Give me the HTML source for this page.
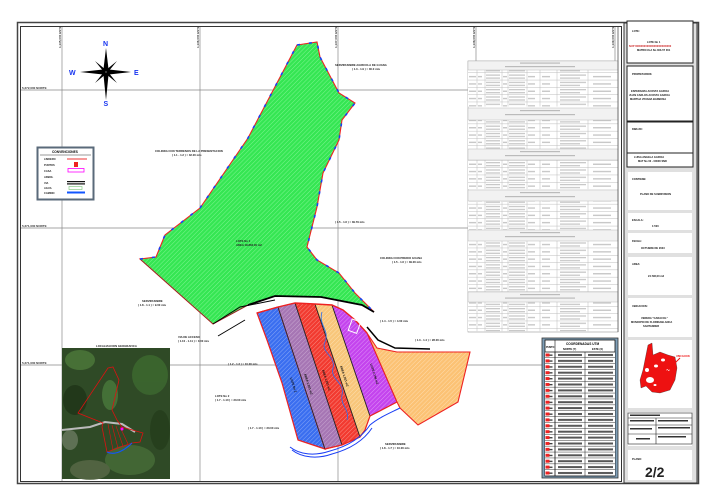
<!DOCTYPE html>
<html><head><meta charset="utf-8"><style>
html,body{margin:0;padding:0;background:#fff}
svg{display:block}
text{font-family:"Liberation Sans",sans-serif;font-weight:bold}
</style></head><body>
<svg width="714" height="501" viewBox="0 0 714 501" xmlns="http://www.w3.org/2000/svg">
<defs>
<pattern id="hg" width="3" height="3" patternUnits="userSpaceOnUse" patternTransform="rotate(45)"><rect width="3" height="3" fill="#35e653"/><line x1="0" y1="0" x2="0" y2="3" stroke="#7cf58f" stroke-width="1"/></pattern>
<pattern id="hb" width="3" height="3" patternUnits="userSpaceOnUse" patternTransform="rotate(45)"><rect width="3" height="3" fill="#3a6ef0"/><line x1="0" y1="0" x2="0" y2="3" stroke="#86a6f6" stroke-width="1"/></pattern>
<pattern id="hp" width="3" height="3" patternUnits="userSpaceOnUse" patternTransform="rotate(45)"><rect width="3" height="3" fill="#a676b4"/><line x1="0" y1="0" x2="0" y2="3" stroke="#c8a6d0" stroke-width="1"/></pattern>
<pattern id="hr" width="3" height="3" patternUnits="userSpaceOnUse" patternTransform="rotate(45)"><rect width="3" height="3" fill="#f23a30"/><line x1="0" y1="0" x2="0" y2="3" stroke="#f88a80" stroke-width="1"/></pattern>
<pattern id="ht" width="3" height="3" patternUnits="userSpaceOnUse" patternTransform="rotate(45)"><rect width="3" height="3" fill="#f8c67a"/><line x1="0" y1="0" x2="0" y2="3" stroke="#fce0b0" stroke-width="1"/></pattern>
<pattern id="hm" width="3" height="3" patternUnits="userSpaceOnUse" patternTransform="rotate(45)"><rect width="3" height="3" fill="#c444ee"/><line x1="0" y1="0" x2="0" y2="3" stroke="#de90f6" stroke-width="1"/></pattern>
<pattern id="ho" width="3" height="3" patternUnits="userSpaceOnUse" patternTransform="rotate(45)"><rect width="3" height="3" fill="#fcc274"/><line x1="0" y1="0" x2="0" y2="3" stroke="#fedcae" stroke-width="1"/></pattern>
<pattern id="trow" x="468" y="0" width="150" height="7.3" patternUnits="userSpaceOnUse">
<rect width="150" height="7.3" fill="#fff"/>
<line x1="0" y1="7.1" x2="150" y2="7.1" stroke="#bbb" stroke-width="0.5"/>
<g fill="#c4c4c4"><rect x="1" y="3" width="7" height="1.3"/><rect x="10" y="3" width="4" height="1.3"/><rect x="18" y="1.5" width="14" height="1.2"/><rect x="18" y="4.5" width="14" height="1.2"/><rect x="35" y="3" width="4" height="1.3"/><rect x="41" y="1.5" width="16" height="1.2"/><rect x="41" y="4.5" width="16" height="1.2"/><rect x="60" y="3" width="7" height="1.3"/><rect x="74" y="3" width="8" height="1.3"/><rect x="92" y="1.5" width="26" height="1.2"/><rect x="92" y="4.5" width="20" height="1.2"/><rect x="125" y="3" width="18" height="1.3"/></g>
<g stroke="#bbb" stroke-width="0.5"><line x1="9" y1="0" x2="9" y2="7.3"/><line x1="17" y1="0" x2="17" y2="7.3"/><line x1="34" y1="0" x2="34" y2="7.3"/><line x1="40" y1="0" x2="40" y2="7.3"/><line x1="59" y1="0" x2="59" y2="7.3"/><line x1="72" y1="0" x2="72" y2="7.3"/><line x1="89" y1="0" x2="89" y2="7.3"/><line x1="120" y1="0" x2="120" y2="7.3"/></g>
</pattern>
<pattern id="crow" x="545" y="352" width="70" height="5.9" patternUnits="userSpaceOnUse">
<rect width="70" height="5.9" fill="#fff"/>
<line x1="0" y1="5.7" x2="70" y2="5.7" stroke="#333" stroke-width="0.6"/>
<rect x="0.5" y="1.5" width="4" height="3" fill="#e22"/><rect x="4.5" y="2.5" width="3" height="1.3" fill="#333"/>
<line x1="10" y1="0" x2="10" y2="5.9" stroke="#333" stroke-width="0.6"/>
<line x1="40" y1="0" x2="40" y2="5.9" stroke="#333" stroke-width="0.6"/>
<rect x="13" y="2" width="24" height="2" fill="#555"/><rect x="43" y="2" width="25" height="2" fill="#555"/>
</pattern>
</defs>

<rect x="17.5" y="22.5" width="681" height="461" fill="none" stroke="#444" stroke-width="1.5"/>
<rect x="20.5" y="26.5" width="601" height="455" fill="none" stroke="#333" stroke-width="1"/>
<rect x="624" y="23" width="73" height="460" fill="#e0e0e0" stroke="#333" stroke-width="1"/>

<g stroke="#888" stroke-width="0.7">
<line x1="62" y1="27" x2="62" y2="481"/><line x1="200" y1="27" x2="200" y2="481"/><line x1="338" y1="27" x2="338" y2="481"/><line x1="476" y1="27" x2="476" y2="62"/><line x1="615" y1="27" x2="615" y2="62"/>
<line x1="21" y1="90" x2="468" y2="90"/><line x1="21" y1="228" x2="468" y2="228"/><line x1="21" y1="365" x2="545" y2="365"/>
</g>
<g font-size="3" fill="#333">
<text x="22" y="89">5,272,000 NORTE</text><text x="22" y="227">5,271,000 NORTE</text><text x="22" y="364">5,271,000 NORTE</text>
<text transform="translate(61,48) rotate(-90)">1,135,000 ESTE</text><text transform="translate(199,48) rotate(-90)">1,136,000 ESTE</text><text transform="translate(337,48) rotate(-90)">1,137,000 ESTE</text><text transform="translate(475,48) rotate(-90)">1,138,000 ESTE</text><text transform="translate(614,48) rotate(-90)">1,139,000 ESTE</text>
</g>

<g fill="#000">
<polygon points="106,48 108.5,69 106,72 103.5,69"/><polygon points="106,100 108.5,75 106,72 103.5,75"/>
<polygon points="80,72 103,69.5 106,72 103,74.5"/><polygon points="131,72 109,69.5 106,72 109,74.5"/>
<polygon points="95,61 106,70 104,72"/><polygon points="117,61 106,70 108,72"/><polygon points="95,83 106,74 104,72"/><polygon points="117,83 106,74 108,72"/>
</g>
<g fill="#1533f0" font-size="7"><text x="103" y="46">N</text><text x="103.5" y="106">S</text><text x="69" y="75">W</text><text x="134" y="75">E</text></g>

<rect x="37.5" y="147.5" width="56" height="52" fill="#fff" stroke="#5a6a7a" stroke-width="2"/>
<line x1="40" y1="155" x2="91" y2="155" stroke="#333" stroke-width="0.6"/>
<text x="52" y="153" font-size="3.2">CONVENCIONES</text>
<g font-size="2.6" fill="#222"><text x="44" y="160">LINDERO</text><text x="44" y="166">PUNTOS</text><text x="44" y="172">CASA</text><text x="44" y="178">ARBOL</text><text x="44" y="184">VIA</text><text x="44" y="189">AGUA</text><text x="44" y="194">CAMINO</text></g>
<line x1="67" y1="159" x2="87" y2="159" stroke="#e33" stroke-width="1"/>
<rect x="74" y="162" width="4" height="5" fill="#e22"/>
<rect x="68" y="168.5" width="16" height="3.5" fill="none" stroke="#f0f" stroke-width="0.8"/>
<rect x="67" y="181" width="18" height="1.2" fill="#111"/><rect x="67" y="183.3" width="18" height="1.2" fill="#111"/>
<rect x="69" y="186.5" width="13" height="3" fill="none" stroke="#8c8" stroke-width="0.7"/>
<rect x="67" y="191.5" width="18" height="2" fill="#15f"/>

<polygon points="297,45 317,42 320,57 339,93 355,103 342,120 339,140 323,173 317,207 307,247 317,260 339,273 355,293 374,312 362,305 321,297 275,296 248,305 213,324 140,259 156,257 165,235 200,208 248,138" fill="url(#hg)" stroke="#e22" stroke-width="1.1"/>
<polyline points="140,259 213,324 248,305" fill="none" stroke="#333" stroke-width="0.5"/>
<polyline points="248,305 275,296 321,297 362,305 374,312" fill="none" stroke="#000" stroke-width="1.8"/>
<polyline points="213,324 240,307 275,300" fill="none" stroke="#000" stroke-width="1"/>
<g stroke="#1a3ef5" stroke-width="1.6" stroke-dasharray="3,9" fill="none">
<polyline points="297,45 317,42 320,57 339,93 355,103 342,120 339,140 323,173 317,207 307,247 317,260 339,273 355,293 374,312"/>
<polyline points="140,259 156,257 165,235 200,208 248,138 297,45"/>
</g>
<g font-size="2.8" fill="#222">
<text x="335" y="66">SERVIDUMBRE AGRICOLA DE GUANA</text><text x="352" y="70">( 1.3 - 1.9 ) = 30.0 mts</text>
<text x="155" y="152">COLINDA CON TERRENOS DE LA PRESENTACION</text><text x="172" y="156">( 1.1 - 1.2 ) = 32.00 mts</text>
<text x="236" y="242">LOTE No 1</text><text x="236" y="246">AREA 18.862,00 m2</text>
<text x="335" y="223">( 1.5 - 1.6 ) = 39.79 mts</text>
<text x="380" y="259">COLINDA CON PREDIO GUANA</text><text x="392" y="263">( 1.5 - 1.6 ) = 39.00 mts</text>
<text x="142" y="302">SERVIDUMBRE</text><text x="138" y="306">( 1.8 - 1.1 ) = 9.00 mts</text>
<text x="178" y="338">VIA DE ACCESO</text><text x="178" y="342">( 1.10 - 1.11 ) = 0.00 mts</text>
<text x="380" y="322">( 1.4 - 1.5 ) = 4.00 mts</text>
<text x="415" y="341">( 1.3 - 1.4 ) = 28.00 mts</text>
<text x="228" y="365">( 1.2 - 1.3 ) = 10.00 mts</text>
<text x="215" y="397">LOTE No 2</text><text x="215" y="401">( 1.7 - 1.10 ) = 30.00 mts</text>
<text x="248" y="429">( 1.7 - 1.10 ) = 30.00 mts</text>
<text x="385" y="445">SERVIDUMBRE</text><text x="380" y="449">( 1.8 - 1.7 ) = 10.00 mts</text>
<text x="96" y="347">LOCALIZACION GEOGRAFICA</text>
</g>
<polyline points="218,336 245,320" stroke="#000" stroke-width="1"/>

<polygon points="257,313 278,307 325,449 298,440 282,383 267,340" fill="url(#hb)" stroke="#e22" stroke-width="1.2"/>
<polygon points="278,307 295,303 342,445 325,449" fill="url(#hp)" stroke="#222" stroke-width="0.8"/>
<polygon points="295,303 315,304 360,437 342,445" fill="url(#hr)" stroke="#222" stroke-width="0.8"/>
<polygon points="315,304 332,305 370,416 365,430 360,437" fill="url(#ht)" stroke="#222" stroke-width="0.8"/>
<polygon points="332,305 343,310 355,320 367,333 397,402 370,416" fill="url(#hm)" stroke="#222" stroke-width="0.8"/>
<polygon points="367,333 377,348 397,352 430,352 470,352 458,402 418,425 400,408 397,402" fill="url(#ho)" stroke="#e22" stroke-width="1.1"/>
<polyline points="257,313 278,307 295,303 315,304 332,305 343,310 355,320 367,333" fill="none" stroke="#e22" stroke-width="1.4"/>
<polyline points="325,449 342,445 360,437 365,430 370,416 397,402" fill="none" stroke="#e22" stroke-width="1.2"/>
<polyline points="367,327 378,340 395,348 430,349" fill="none" stroke="#000" stroke-width="1.5"/>
<path d="M322,312 C318,325 330,330 325,342 C320,352 336,356 333,368 C330,380 345,382 342,395 C340,405 350,410 347,420" fill="none" stroke="#2a6ef0" stroke-width="0.8"/>
<g fill="none" stroke="#1a3ef5" stroke-width="1">
<path d="M290,447 C300,455 315,456 330,451 C345,447 360,440 370,425 C378,418 390,413 400,408"/>
<path d="M292,450 C302,458 318,459 332,454 C347,450 362,443 372,428"/>
</g>
<rect x="350" y="320" width="9" height="12" fill="none" stroke="#fff" stroke-width="1" transform="rotate(20 354 326)"/>
<g font-size="3" fill="#111">
<text transform="translate(290,378) rotate(72)">LOTE No 2</text>
<text transform="translate(304,374) rotate(72)">AREA 1.261 m2</text>
<text transform="translate(322,370) rotate(72)">AREA 1.261 m2</text>
<text transform="translate(340,366) rotate(72)">AREA 1.261 m2</text>
<text transform="translate(370,364) rotate(72)">LOTE 2.796 m2</text>
</g>

<rect x="468" y="61" width="150" height="271" fill="#fff" stroke="#999" stroke-width="0.6"/>
<g>
<rect x="468" y="70" width="150" height="36.5" fill="url(#trow)"/>
<rect x="468" y="120" width="150" height="29.2" fill="url(#trow)"/>
<rect x="468" y="160" width="150" height="29.2" fill="url(#trow)"/>
<rect x="468" y="201" width="150" height="29.2" fill="url(#trow)"/>
<rect x="468" y="241" width="150" height="51.1" fill="url(#trow)"/>
<rect x="468" y="302" width="150" height="29.2" fill="url(#trow)"/>
</g>
<g fill="#f2f2f2" stroke="#aaa" stroke-width="0.4">
<rect x="468" y="61" width="150" height="9"/><rect x="468" y="108" width="150" height="12"/><rect x="468" y="149" width="150" height="11"/><rect x="468" y="190" width="150" height="11"/><rect x="468" y="230" width="150" height="11"/><rect x="468" y="292" width="150" height="10"/>
</g>
<g fill="#bbb"><rect x="520" y="62.5" width="40" height="1.2"/><rect x="505" y="66" width="70" height="1.2"/><rect x="520" y="110" width="40" height="1.2"/><rect x="505" y="114" width="70" height="1.2"/><rect x="520" y="151" width="40" height="1.2"/><rect x="505" y="155" width="70" height="1.2"/><rect x="520" y="192" width="40" height="1.2"/><rect x="505" y="196" width="70" height="1.2"/><rect x="520" y="232" width="40" height="1.2"/><rect x="505" y="236" width="70" height="1.2"/><rect x="520" y="294" width="40" height="1.2"/><rect x="505" y="297.5" width="70" height="1.2"/></g>
<line x1="618" y1="27" x2="618" y2="332" stroke="#555" stroke-width="0.8"/>

<rect x="542" y="338" width="76" height="140" fill="#7f9fb8" stroke="#333" stroke-width="0.8"/>
<rect x="545" y="340" width="70" height="136" fill="#fff" stroke="#111" stroke-width="0.8"/>
<rect x="545" y="352" width="70" height="124" fill="url(#crow)"/>
<line x1="545" y1="352" x2="615" y2="352" stroke="#111" stroke-width="0.8"/>
<line x1="555" y1="340" x2="555" y2="476" stroke="#111" stroke-width="0.6"/>
<text x="566" y="345" font-size="3.2">COORDENADAS UTM</text>
<text x="563" y="350" font-size="2.6">NORTE (Y)</text><text x="592" y="350" font-size="2.6">ESTE (X)</text>
<text x="546" y="348" font-size="2.4">PUNTO</text>

<rect x="62" y="348" width="108" height="131" fill="#2f4a26"/>
<g opacity="0.8">
<ellipse cx="80" cy="360" rx="15" ry="10" fill="#4d7a3a"/><ellipse cx="150" cy="375" rx="18" ry="20" fill="#3d6a30"/>
<ellipse cx="75" cy="400" rx="12" ry="15" fill="#1f3418"/><ellipse cx="130" cy="460" rx="25" ry="15" fill="#476e38"/>
<ellipse cx="90" cy="470" rx="20" ry="10" fill="#5a6a48"/><ellipse cx="160" cy="430" rx="10" ry="20" fill="#253d1c"/>
<ellipse cx="110" cy="395" rx="8" ry="15" fill="#4a7a3c"/><ellipse cx="70" cy="440" rx="8" ry="10" fill="#6a7a60"/>
</g>
<polyline points="62,430 90,427 105,422 122,424 135,432" fill="none" stroke="#bbb" stroke-width="2"/>
<polygon points="108,368 113,367 119,380 112,410 117,420 122,427 143,433 140,442 132,443 107,452 102,427 103,423 78,413" fill="none" stroke="#d11" stroke-width="0.8"/>
<g stroke="#d11" stroke-width="0.6"><line x1="108" y1="424" x2="113" y2="450"/><line x1="112" y1="425" x2="118" y2="448"/><line x1="116" y1="426" x2="123" y2="446"/><line x1="120" y1="427" x2="128" y2="444"/></g>
<path d="M107,452 C115,456 125,450 132,443" fill="none" stroke="#15f" stroke-width="1.2"/>
<circle cx="122" cy="429" r="1.5" fill="#f0f"/>

<g fill="#fff" stroke="#222" stroke-width="1">
<rect x="627" y="21" width="66" height="42"/>
<rect x="627" y="66" width="66" height="55"/>
<rect x="627" y="122" width="66" height="45"/>
</g>
<line x1="627" y1="153" x2="693" y2="153" stroke="#222" stroke-width="1"/>
<g fill="#fff">
<rect x="628" y="172" width="64" height="38"/><rect x="628" y="213" width="64" height="17"/><rect x="628" y="233" width="64" height="20"/><rect x="628" y="257" width="64" height="38"/><rect x="628" y="298" width="64" height="39"/><rect x="628" y="340" width="64" height="68"/><rect x="628" y="412" width="64" height="34"/><rect x="628" y="450" width="64" height="30"/>
</g>
<g font-size="2.6" fill="#111">
<text x="632" y="32">LOTE:</text>
<text x="647" y="43">LOTE No 1</text><text x="629" y="47" fill="#c22">NUP 0000000000000000000000000</text><text x="637" y="51">MATRICULA No 303-57 001</text>
<text x="632" y="75">PROPIETARIOS:</text>
<text x="631" y="92">ESPERANZA ACOSTA GARCIA</text><text x="629" y="96">JUAN CARLOS ACOSTA GARCIA</text><text x="630" y="100">MARTHA VIVIANA BARBOSA</text>
<text x="632" y="130">DIBUJO:</text>
<text x="634" y="158">LUISA ANGELA GARCIA</text><text x="638" y="162">MAT No 00 - 00000 SND</text>
<text x="632" y="180">CONTIENE:</text><text x="640" y="195">PLANO DE SUBDIVISION</text>
<text x="632" y="221">ESCALA:</text><text x="652" y="227">1:500</text>
<text x="632" y="242">FECHA:</text><text x="641" y="249">OCTUBRE DE 2023</text>
<text x="632" y="265">AREA:</text><text x="648" y="277">24.796,00 m2</text>
<text x="632" y="307">UBICACION:</text><text x="641" y="319">VEREDA "CARACOL"</text><text x="631" y="323">MUNICIPIO DE FLORIDABLANCA</text><text x="643" y="327">SANTANDER</text>
<text x="632" y="460">PLANO:</text>
</g>
<text x="645" y="477" font-size="14" font-weight="normal" fill="#222">2/2</text>
<g fill="#e11" stroke="#222" stroke-width="0.3">
<path d="M648,345 L652,343 L653,355 L660,352 L668,355 L675,357 L677,368 L675,380 L670,390 L660,393 L652,392 L646,386 L641,388 L640,380 L643,370 L645,360 Z"/>
</g>
<g fill="#fff"><ellipse cx="650" cy="380" rx="4" ry="3"/><ellipse cx="656" cy="366" rx="2" ry="1.5"/><ellipse cx="663" cy="360" rx="2" ry="1.5"/><ellipse cx="647" cy="370" rx="2" ry="2"/><ellipse cx="668" cy="370" rx="1.5" ry="1"/><ellipse cx="655" cy="385" rx="1.5" ry="1"/></g>
<line x1="666" y1="372" x2="680" y2="358" stroke="#e11" stroke-width="1"/>
<text x="676" y="357" font-size="2.4" fill="#e11">UBICACION</text>
<g fill="none" stroke="#222" stroke-width="0.6">
<rect x="628" y="413" width="64" height="31"/><line x1="628" y1="418" x2="692" y2="418"/><line x1="628" y1="425" x2="692" y2="425"/><line x1="628" y1="434" x2="692" y2="434"/><line x1="656" y1="418" x2="656" y2="444"/>
</g>
<g fill="#333"><rect x="630" y="414.5" width="30" height="1.5"/><rect x="630" y="420" width="24" height="1.5"/><rect x="658" y="420" width="30" height="1.5"/><rect x="658" y="427" width="32" height="1.5"/><rect x="658" y="436" width="28" height="1.5"/><rect x="630" y="428" width="22" height="1.5"/><rect x="636" y="438" width="14" height="1.5"/></g>
</svg>
</body></html>
